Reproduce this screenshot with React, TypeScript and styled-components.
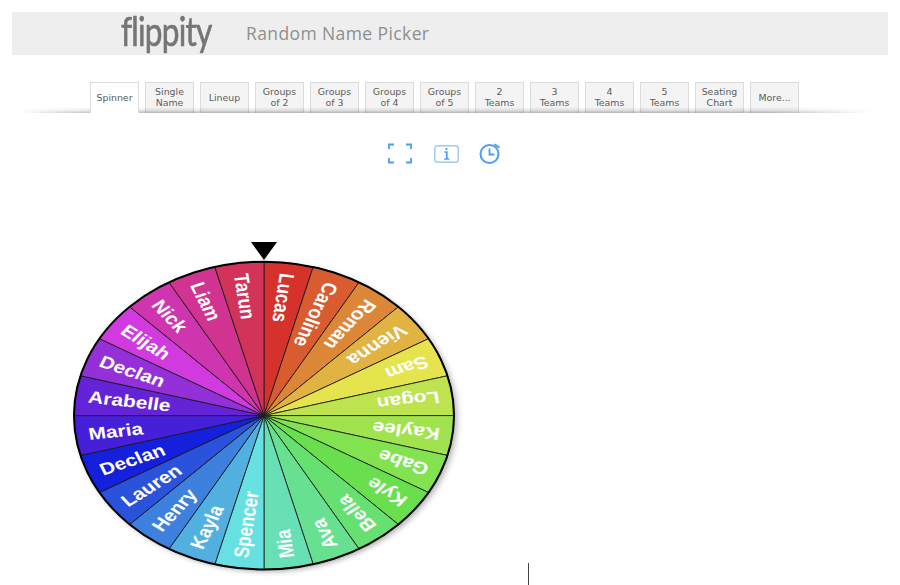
import React from "react";
import styled, { createGlobalStyle } from "styled-components";

const Global = createGlobalStyle`
  html, body { margin: 0; padding: 0; background: #fff; overflow: hidden; }
  body { font-family: "Open Sans", "Liberation Sans", sans-serif; }
`;

const Page = styled.div`
  box-sizing: border-box;
  width: 900px;
  height: 585px;
  padding: 12px 12px 0;
  overflow: hidden;
  display: flex;
  flex-direction: column;
`;

const Header = styled.header`
  height: 43px;
  background: #eeeeee;
  display: flex;
  align-items: center;
  padding-left: 109px;
`;

const LogoBox = styled.div`
  width: 125px;
  flex: none;
`;

const Logo = styled.div`
  display: inline-block;
  font-family: "Lato", sans-serif;
  font-size: 41px;
  font-weight: 400;
  line-height: 43px;
  letter-spacing: -1px;
  color: #757575;
  -webkit-text-stroke: 0.7px #757575;
  transform: scaleX(0.77);
  transform-origin: left center;
  margin-top: -7px;
`;

const Title = styled.h1`
  margin: -2px 0 0;
  font-family: "Open Sans", sans-serif;
  font-size: 17.5px;
  font-weight: 400;
  letter-spacing: 0.4px;
  color: #8f8f8f;
`;

const TabStrip = styled.nav`
  position: relative;
  margin-top: 27px;
  height: 31px;
  padding-left: 78px;
  display: flex;
  gap: 6px;

  &::after {
    content: "";
    position: absolute;
    left: 6px;
    right: 16px;
    bottom: 0;
    height: 6px;
    pointer-events: none;
    background: linear-gradient(to bottom, rgba(0, 0, 0, 0), rgba(0, 0, 0, 0.09) 55%, rgba(0, 0, 0, 0.27));
    mask-image: linear-gradient(to right, transparent, #000 9%, #000 88%, transparent);
  }
`;

const Tab = styled.div<{ $active?: boolean }>`
  box-sizing: border-box;
  position: relative;
  z-index: ${(p) => (p.$active ? 1 : 0)};
  width: 49px;
  height: 31px;
  padding-bottom: 2px;
  border: 1px solid #dcdcdc;
  border-bottom: none;
  background: ${(p) => (p.$active ? "#fff" : "#f4f4f4")};
  display: flex;
  align-items: center;
  justify-content: center;
  text-align: center;
  font-family: "DejaVu Sans", sans-serif;
  font-size: 9.4px;
  line-height: 11px;
  color: #5c5c5c;
`;

const IconRow = styled.div`
  margin-top: 30px;
  height: 21px;
  padding-left: 375px;
  display: flex;
  align-items: center;
`;

const IconSlot = styled.svg<{ $gap: number }>`
  display: block;
  margin-right: ${(p) => p.$gap}px;
  fill: none;
  stroke: #4b9cf6;
`;

const Stage = styled.div`
  margin-top: 76px;
  flex: 1;
  display: flex;
  padding-left: 48px;
`;

const WheelSvg = styled.svg`
  display: block;
  width: 408px;
  height: 345px;
  flex: none;
`;

const SliceName = styled.text`
  font-family: "Liberation Sans", Arial, sans-serif;
  font-size: 21px;
  font-weight: 700;
  fill: #fff;
  dominant-baseline: central;
`;

const Caret = styled.div`
  width: 1px;
  height: 22px;
  background: #444;
  margin-left: 60px;
  align-self: flex-end;
`;

const tabs = [
  "Spinner", "Single\nName", "Lineup", "Groups\nof 2", "Groups\nof 3", "Groups\nof 4", "Groups\nof 5",
  "2\nTeams", "3\nTeams", "4\nTeams", "5\nTeams", "Seating\nChart", "More...",
];

const slices: [string, string][] = [
  ["Lucas", "#d6322c"], ["Caroline", "#d95b30"], ["Roman", "#dc8637"], ["Vienna", "#e0b342"],
  ["Sam", "#e6e44e"], ["Logan", "#bde34e"], ["Kaylee", "#a0e34f"], ["Gabe", "#82e24f"],
  ["Kyle", "#69df4e"], ["Bella", "#66e070"], ["Ava", "#67e092"], ["Mia", "#67e0b5"],
  ["Spencer", "#66e0e0"], ["Kayla", "#52b0e0"], ["Henry", "#3d80de"], ["Lauren", "#2a52da"],
  ["Declan", "#1420dc"], ["Maria", "#4520d8"], ["Arabelle", "#6523d8"], ["Declan", "#9430d8"],
  ["Elijah", "#d03adf"], ["Nick", "#d035b0"], ["Liam", "#d03490"], ["Tarun", "#d23358"],
];

const R = 190;
const point = (deg: number) => {
  const a = (deg * Math.PI) / 180;
  return `${(R * Math.sin(a)).toFixed(2)} ${(-R * Math.cos(a)).toFixed(2)}`;
};

function Wheel() {
  return (
    <WheelSvg viewBox="0 0 408 345">
      <defs>
        <filter id="wheelShadow" x="-10%" y="-10%" width="120%" height="120%">
          <feDropShadow dx="3" dy="3" stdDeviation="3" floodColor="#000" floodOpacity="0.3" />
        </filter>
      </defs>
      <g transform="translate(204 175.6) scale(1 0.81)">
        <circle r={R} fill="#000" filter="url(#wheelShadow)" />
        {slices.map(([, color], i) => (
          <path
            key={i}
            d={`M0 0 L${point(i * 15)} A${R} ${R} 0 0 1 ${point((i + 1) * 15)} Z`}
            fill={color}
            stroke="#1c1c1c"
            strokeWidth="0.85"
            vectorEffect="non-scaling-stroke"
          />
        ))}
        <circle r={R} fill="none" stroke="#000" strokeWidth="2" vectorEffect="non-scaling-stroke" />
        {slices.map(([name], i) => (
          <SliceName key={i} transform={`rotate(${7.5 + i * 15}) translate(0 -177) rotate(90)`}>
            {name}
          </SliceName>
        ))}
      </g>
      <polygon points="191,2 217,2 204,20" fill="#000" />
    </WheelSvg>
  );
}

export default function App() {
  return (
    <Page>
      <Global />
      <Header>
        <LogoBox>
          <Logo>flippity</Logo>
        </LogoBox>
        <Title>Random Name Picker</Title>
      </Header>
      <TabStrip>
        {tabs.map((t, i) => (
          <Tab key={t} $active={i === 0}>
            <span>
              {t.split("\n").map((line, j) => (
                <React.Fragment key={j}>
                  {j > 0 && <br />}
                  {line}
                </React.Fragment>
              ))}
            </span>
          </Tab>
        ))}
      </TabStrip>
      <IconRow>
        <IconSlot $gap={21} width="26" height="21" viewBox="0 0 26 21" strokeWidth="1.8">
          <path d="M2 6V1.5H7M19 1.5H24V6M2 15V19.5H7M19 19.5H24V15" />
        </IconSlot>
        <IconSlot $gap={20} width="25" height="18" viewBox="0 0 25 18" strokeWidth="1.2">
          <rect x="0.8" y="0.8" width="23.4" height="16.4" rx="2.5" stroke="#8dbdf7" />
          <path d="M12.5 3V5M10.4 7H12.8V14M10.2 14H15.2" strokeWidth="1.7" stroke="#4b9cf6" />
        </IconSlot>
        <IconSlot $gap={0} width="22" height="21" viewBox="0 0 22 21" strokeWidth="2">
          <circle cx="10.5" cy="11" r="9" />
          <path d="M10.5 5.5V11.5H15.5" strokeWidth="1.8" />
          <path d="M15.5 1.2L20.5 4.8" />
        </IconSlot>
      </IconRow>
      <Stage>
        <Wheel />
        <Caret />
      </Stage>
    </Page>
  );
}
